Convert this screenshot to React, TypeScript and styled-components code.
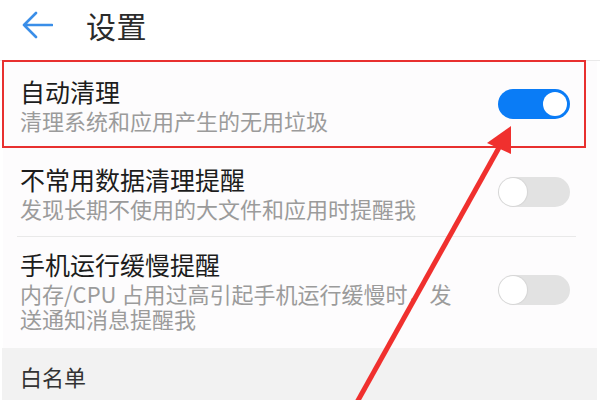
import React from "react";
import styled, { createGlobalStyle } from "styled-components";

const GlobalStyle = createGlobalStyle`
  html, body {
    margin: 0;
    padding: 0;
    background: #ffffff;
  }
  body {
    font-family: "Noto Sans CJK SC", "Noto Sans", sans-serif;
  }
`;

const Screen = styled.div`
  position: relative;
  width: 600px;
  height: 400px;
  overflow: hidden;
  background: #ffffff;
`;

const Header = styled.div`
  display: flex;
  align-items: center;
  gap: 33px;
  height: 50px;
  padding: 0 0 10px 22px;
  border-bottom: 1px solid #e9e9e9;
`;

const BackIcon = styled.svg`
  width: 31px;
  height: 28px;
  flex-shrink: 0;
`;

const PageTitle = styled.div`
  font-size: 30px;
  line-height: 40px;
  color: #2b2b2b;
  letter-spacing: 0.5px;
`;

const List = styled.div`
  display: flex;
  flex-direction: column;
  margin: 0 3px;
  background: #fdfcfd;
`;

const Row = styled.div<{ $top: number; $bottom: number; $divider?: boolean }>`
  display: flex;
  align-items: center;
  padding: ${(p) => p.$top}px 6px ${(p) => p.$bottom}px 0;
  margin: 0 21px 0 14px;
  border-bottom: 1px solid ${(p) => (p.$divider ? "#e9e9e9" : "transparent")};
`;

const TextBlock = styled.div`
  flex: 1;
  padding-left: 3px;
`;

const ItemTitle = styled.div`
  font-size: 25px;
  line-height: 32px;
  color: #1c1c1c;
`;

const ItemDesc = styled.div`
  font-size: 22px;
  line-height: 25px;
  color: #9b9b9b;
  margin-top: 1px;
`;

const Track = styled.div<{ $on: boolean }>`
  position: relative;
  width: 72px;
  height: 30px;
  border-radius: 15px;
  flex-shrink: 0;
  background: ${(p) => (p.$on ? "#0a7cf6" : "#e2e2e2")};
`;

const Knob = styled.div<{ $on: boolean }>`
  position: absolute;
  top: ${(p) => (p.$on ? 3 : 1)}px;
  ${(p) => (p.$on ? "right: 3px;" : "left: 1px;")}
  width: ${(p) => (p.$on ? 24 : 28)}px;
  height: ${(p) => (p.$on ? 24 : 28)}px;
  border-radius: 50%;
  background: #ffffff;
  box-shadow: ${(p) => (p.$on ? "none" : "0 0 1px 1px rgba(0,0,0,0.06)")};
`;

const Section = styled.div`
  box-sizing: border-box;
  height: 52px;
  margin: 0 3px 0 2px;
  padding: 13px 0 0 18px;
  background: #f2f2f2;
  font-size: 22px;
  line-height: 30px;
  color: #333333;
`;

const Highlight = styled.div`
  position: absolute;
  left: 2px;
  top: 60px;
  width: 584px;
  height: 88px;
  box-sizing: border-box;
  border: 2.5px solid #e8302f;
  pointer-events: none;
`;

const ArrowLayer = styled.svg`
  position: absolute;
  left: 0;
  top: 0;
  width: 600px;
  height: 400px;
  pointer-events: none;
`;

const Toggle = ({ on }: { on: boolean }) => (
  <Track $on={on}>
    <Knob $on={on} />
  </Track>
);

export default function App() {
  return (
    <>
      <GlobalStyle />
      <Screen>
        <Header>
          <BackIcon viewBox="0 0 31 28">
            <path
              d="M30 14 H2 M14 2 L2 14 L14 26"
              fill="none"
              stroke="#3a8ee8"
              strokeWidth="2.6"
              strokeLinecap="round"
              strokeLinejoin="round"
            />
          </BackIcon>
          <PageTitle>设置</PageTitle>
        </Header>

        <List>
          <Row $top={14} $bottom={13}>
            <TextBlock>
              <ItemTitle>自动清理</ItemTitle>
              <ItemDesc>清理系统和应用产生的无用垃圾</ItemDesc>
            </TextBlock>
            <Toggle on />
          </Row>
          <Row $top={16} $bottom={15} $divider>
            <TextBlock>
              <ItemTitle>不常用数据清理提醒</ItemTitle>
              <ItemDesc>发现长期不使用的大文件和应用时提醒我</ItemDesc>
            </TextBlock>
            <Toggle on={false} />
          </Row>
          <Row $top={11} $bottom={16}>
            <TextBlock>
              <ItemTitle>手机运行缓慢提醒</ItemTitle>
              <ItemDesc>
                内存/CPU 占用过高引起手机运行缓慢时，发
                <br />
                送通知消息提醒我
              </ItemDesc>
            </TextBlock>
            <Toggle on={false} />
          </Row>
        </List>

        <Section>白名单</Section>

        <Highlight />
        <ArrowLayer viewBox="0 0 600 400">
          <line x1="501" y1="144" x2="356" y2="404" stroke="#f0302e" strokeWidth="5" />
          <polygon points="511,126 487,143 511,154" fill="#f0302e" />
        </ArrowLayer>
      </Screen>
    </>
  );
}
